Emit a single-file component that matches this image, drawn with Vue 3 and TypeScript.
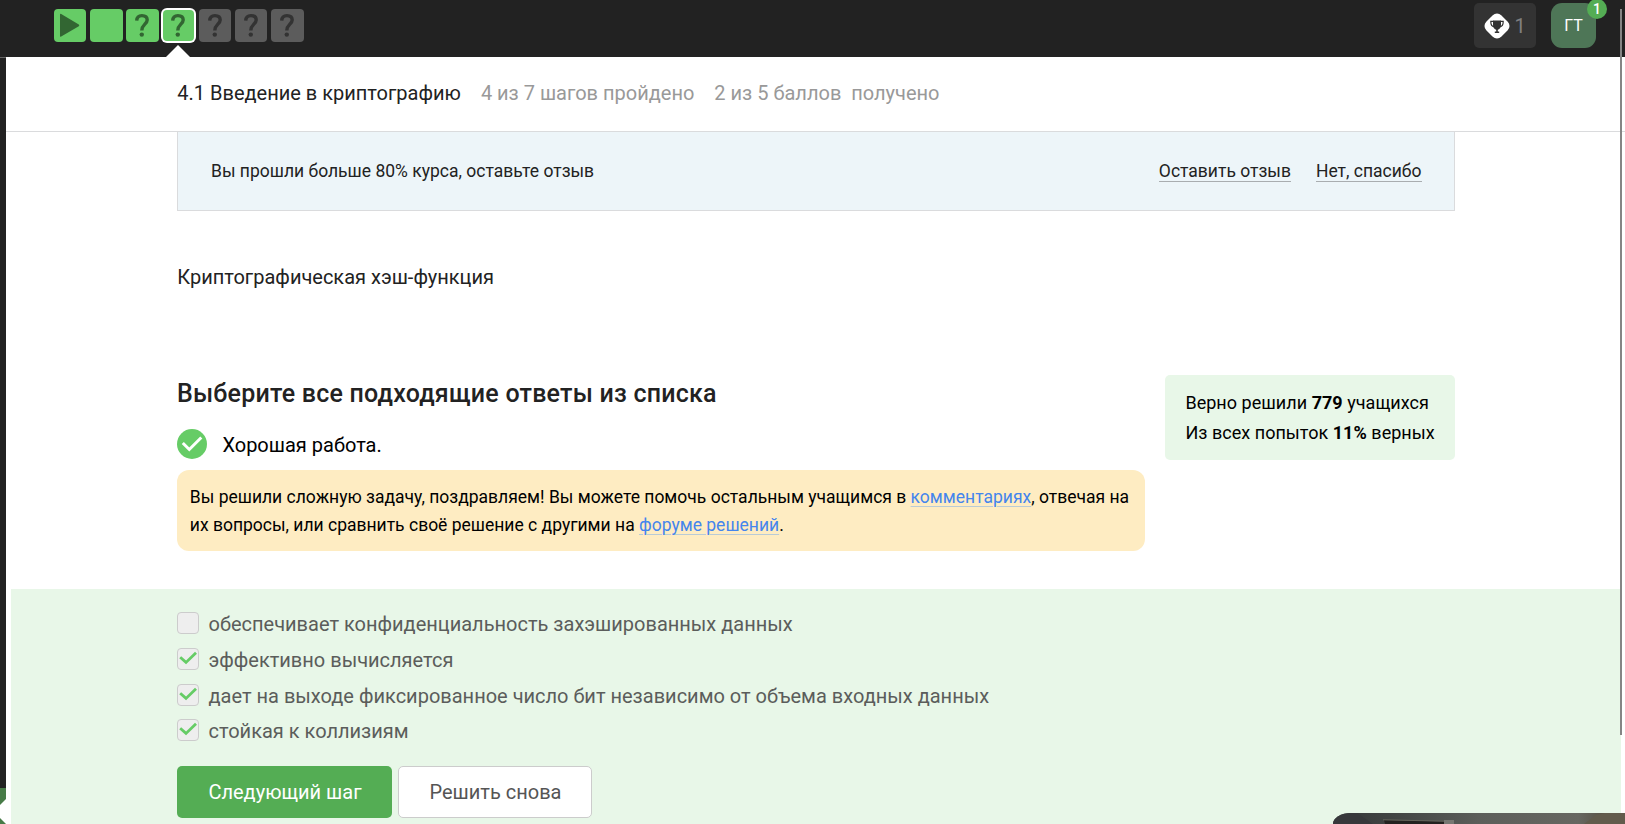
<script setup lang="ts">
type StepKind = 'video' | 'text' | 'quiz'
interface Step { kind: StepKind; passed: boolean; active?: boolean }
interface Answer { label: string; checked: boolean }

const steps: Step[] = [
  { kind: 'video', passed: true },
  { kind: 'text', passed: true },
  { kind: 'quiz', passed: true },
  { kind: 'quiz', passed: true, active: true },
  { kind: 'quiz', passed: false },
  { kind: 'quiz', passed: false },
  { kind: 'quiz', passed: false },
]

const answers: Answer[] = [
  { label: 'обеспечивает конфиденциальность захэшированных данных', checked: false },
  { label: 'эффективно вычисляется', checked: true },
  { label: 'дает на выходе фиксированное число бит независимо от объема входных данных', checked: true },
  { label: 'стойкая к коллизиям', checked: true },
]
</script>

<template>
  <div class="page">
    <header class="topbar">
      <nav class="steps">
        <div v-for="(s, i) in steps" :key="i" class="step" :class="{ passed: s.passed, active: s.active }">
          <svg v-if="s.kind === 'video'" class="step-icon" viewBox="0 0 32 33"><path d="M6 5.5 Q6 4.2 7.2 5 L24.8 15.4 Q25.8 16.3 24.8 17.2 L7.2 27.4 Q6 28.2 6 26.9Z" fill="#326632" /></svg>
          <svg v-else-if="s.kind === 'quiz'" class="step-icon" viewBox="0 0 32 33">
            <path d="M10.7 11.6 C10.9 8.2 12.8 6.6 15.9 6.6 C19.2 6.6 21.2 8.2 21.2 11 C21.2 15 15.8 15.6 15.8 21.4" fill="none" stroke="currentColor" stroke-width="3.4" />
            <circle cx="15.8" cy="25.6" r="2.2" fill="currentColor" />
          </svg>
          <span v-if="s.active" class="pointer"></span>
        </div>
      </nav>
      <div class="user-area">
        <div class="trophy">
          <svg class="trophy-icon" viewBox="0 0 26 26">
            <rect x="2.4" y="2.4" width="21.2" height="21.2" rx="6" transform="rotate(45 13 13)" fill="#fff" />
            <path d="M9 7.5H17V12C17 15 15.3 16.4 13.8 16.8V18.6H15.2V20H10.8V18.6H12.2V16.8C10.7 16.4 9 15 9 12Z" fill="#333" />
            <path d="M9.5 8.4H6.8C6.8 11.6 8 13.4 10 13.6M16.5 8.4H19.2C19.2 11.6 18 13.4 16 13.6" fill="none" stroke="#333" stroke-width="1.2" />
          </svg>
          <span>1</span>
        </div>
        <div class="avatar">ГТ<span class="badge">1</span></div>
      </div>
    </header>

    <div class="body">
      <aside class="side">
        <svg class="side-toggle" width="6" height="36" viewBox="0 0 6 36"><rect width="6" height="36" fill="#477b47" /><path d="M6 11L0 17V30L6 36Z" fill="#fff" /></svg>
      </aside>
      <main class="content">
        <div class="lesson-bar">
          <span class="lesson-title">4.1 Введение в криптографию</span>
          <span class="steps-done">4 из 7 шагов пройдено</span>
          <span class="points">2 из 5 баллов&nbsp; получено</span>
        </div>
        <section class="banner">
          <span class="banner-text">Вы прошли больше 80% курса, оставьте отзыв</span>
          <a class="leave">Оставить отзыв</a>
          <a>Нет, спасибо</a>
        </section>
        <p class="topic">Криптографическая хэш-функция</p>
        <section class="task">
          <div class="result">
            <h2>Выберите все подходящие ответы из списка</h2>
            <div class="status">
              <svg width="30" height="30" viewBox="0 0 30 30"><circle cx="15" cy="15" r="15" fill="#66cc66" /><path d="M5.8 14L12.3 20.5L24.3 8.5" fill="none" stroke="#fff" stroke-width="3" /></svg>
              <span>Хорошая работа.</span>
            </div>
            <div class="congrats">
              <div>Вы решили сложную задачу, поздравляем! Вы можете помочь остальным учащимся в <a>комментариях</a>, отвечая на</div>
              <div>их вопросы, или сравнить своё решение с другими на <a>форуме решений</a>.</div>
            </div>
          </div>
          <div class="stats">
            <div>Верно решили <b>779</b> учащихся</div>
            <div>Из всех попыток <b>11%</b> верных</div>
          </div>
        </section>
        <section class="attempt">
          <div v-for="a in answers" :key="a.label" class="answer">
            <span class="box">
              <svg v-if="a.checked" width="20" height="20" viewBox="0 0 20 20"><path d="M2.2 8.2L8 13.4L18 3.8" fill="none" stroke="#66cc66" stroke-width="2.8" /></svg>
            </span>
            <span class="label">{{ a.label }}</span>
          </div>
          <div class="buttons">
            <button class="next">Следующий шаг</button>
            <button class="again">Решить снова</button>
          </div>
        </section>
      </main>
    </div>
    <div class="scrollbar"></div>
    <div class="camera">
      <svg width="292" height="11" viewBox="0 0 292 11">
        <defs><linearGradient id="wall"><stop offset="0" stop-color="#343638" /><stop offset=".2" stop-color="#414443" /><stop offset=".5" stop-color="#5c5e5a" /><stop offset=".84" stop-color="#676761" /><stop offset=".92" stop-color="#5a5448" /><stop offset="1" stop-color="#665f4e" /></linearGradient></defs>
        <rect width="292" height="11" fill="url(#wall)" />
        <path d="M0 0H24L40 11H0Z" fill="#37383b" />
        <path d="M51 7L112 8.5V11H52Z" fill="#23211f" />
        <path d="M50 6.8L111 8.2" stroke="#65645b" stroke-width="1" />
        <path d="M111 7H121V11H111Z" fill="#777772" />
        <path d="M251 11L263 2L272 0H292V11Z" fill="#625b4c" />
      </svg>
    </div>
  </div>
</template>

<style>
html, body { margin: 0; overflow: hidden; background: #fff; }
</style>

<style scoped>
.page { position: relative; width: 1625px; height: 824px; overflow: hidden; font-family: Roboto, "Noto Sans", sans-serif; font-size: 20px; color: #222; background: #fff; display: flex; flex-direction: column; }
.page * { box-sizing: border-box; }
.topbar { height: 57px; background: #222; display: flex; justify-content: space-between; padding-left: 54px; flex: none; }
.steps { display: flex; gap: 3.8px; padding-top: 9px; }
.step { position: relative; width: 32.4px; height: 33px; border-radius: 4px; background: #5c5c5c; color: #333; }
.step.passed { background: #66cc66; color: #326632; }
.step.active { width: 31px; margin: 0 1px 0 0.4px; box-shadow: 0 0 0 2px #fff; height: 31px; margin-top: 1px; }
.step-icon { display: block; width: 32px; height: 33px; }
.step.active .step-icon { margin: -1px 0 0 -0.8px; }
.pointer { position: absolute; left: 3px; top: 35px; border: 12px solid transparent; border-top: 0; border-bottom: 12px solid #fff; }
.user-area { display: flex; padding: 3px 29px 0 0; gap: 15px; }
.trophy { width: 62px; height: 45px; border-radius: 5px; background: #333; color: #808080; display: flex; align-items: center; padding-left: 9.5px; gap: 5px; }
.trophy-icon { width: 26px; height: 26px; }
.avatar { position: relative; width: 45px; height: 45px; border-radius: 11px; background: #4e7657; color: #fff; font-size: 16px; display: flex; align-items: center; justify-content: center; }
.badge { position: absolute; left: 36px; top: -4px; width: 20px; height: 20px; border-radius: 50%; background: #54ad54; font-size: 14px; line-height: 20px; text-align: center; font-weight: 500; }
.body { flex: 1; display: flex; min-height: 0; }
.side { width: 6px; background: #222; border-top: 1px solid #666; display: flex; flex-direction: column; justify-content: flex-end; }
.side-toggle { display: block; flex: none; }
.content { flex: 1; min-width: 0; display: flex; flex-direction: column; }
.lesson-bar { height: 75px; flex: none; border-bottom: 1px solid #dadbdd; padding: 0 0 3px 171.3px; display: flex; align-items: center; gap: 20px; white-space: nowrap; }
.steps-done, .points { color: #999; }
.banner { flex: none; width: 1278px; height: 79px; margin-left: 171px; background: #edf5f9; border: solid #dadbdd; border-width: 0 1px 1px; padding: 0 32.5px 0 33px; display: flex; align-items: center; font-size: 17.5px; gap: 25px; }
.banner-text { margin-right: auto; padding-bottom: 1px; }
.banner a { line-height: 20px; border-bottom: 1px solid #a9adb0; }
.topic { margin: 51px 0 0 171.3px; line-height: 30px; }
.task { margin: 83px 0 0 171px; display: flex; gap: 20px; width: 1278px; align-items: flex-start; }
.result { width: 968px; }
h2 { margin: 0; font-size: 25px; font-weight: 500; line-height: 38px; white-space: nowrap; letter-spacing: 0.22px; }
.status { margin-top: 16px; height: 30px; display: flex; align-items: center; gap: 15.4px; color: #000; }
.status span { padding-top: 2px; }
.congrats { margin-top: 11px; height: 81px; border-radius: 12px; background: #feecc2; padding: 13px 12.8px; font-size: 17.51px; line-height: 28px; color: #000; white-space: nowrap; }
.congrats a { color: #4485ed; text-decoration: underline; text-decoration-color: #b9cbd6; text-decoration-thickness: 1px; text-underline-offset: 3px; }
.stats { flex: 1; height: 85px; background: #e8f7e8; border-radius: 5px; padding: 13px 0 0 20.4px; font-size: 18px; line-height: 30px; letter-spacing: 0.03px; color: #000; white-space: nowrap; }
.attempt { flex: 1; margin: 38px 4px 0 5px; background: #e8f7e8; padding: 18px 0 0 166px; color: #5b5d5b; }
.answer { height: 35.8px; display: flex; align-items: center; gap: 9.5px; line-height: 30px; }
.label { padding-bottom: 2px; }
.answer:nth-child(3) .label { padding-bottom: 0; }
.box { width: 22px; height: 22px; margin-bottom: 4px; border: 1px solid #ccc; border-radius: 4px; background: #eee; }
.answer:nth-child(3) .box { margin-bottom: 3px; }
.box svg { display: block; }
.buttons { display: flex; gap: 6px; margin-top: 16px; }
button { height: 52px; padding: 0 0 0 1px; font: inherit; border-radius: 5px; }
.next { width: 215px; border: 0; background: #54ad54; color: #fff; }
.again { width: 194px; background: #fff; border: 1px solid #ccc; color: #555; }
.scrollbar { position: absolute; left: 1620px; top: 9px; width: 2px; height: 726px; background: #858585; }
.camera { position: absolute; right: 0; bottom: 0; width: 292px; height: 11px; border-top-left-radius: 18px 11px; overflow: hidden; }
.camera svg { display: block; }
</style>
